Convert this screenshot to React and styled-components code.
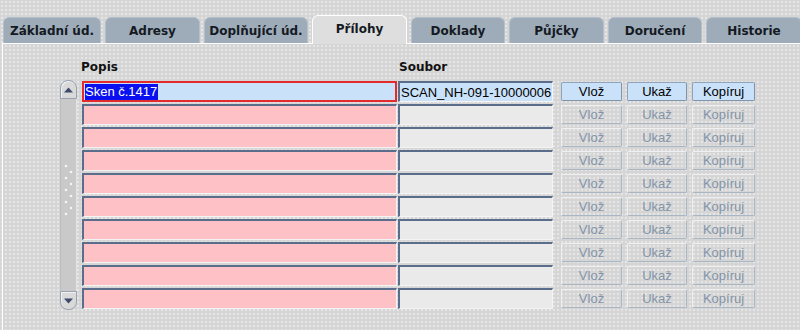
import styled, { createGlobalStyle } from "styled-components";

const GlobalStyle = createGlobalStyle`
  body {
    margin: 0;
    background: #d5d5d5;
    font-family: "Liberation Sans", Arial, sans-serif;
  }
`;

const Page = styled.div`
  width: 800px;
  height: 330px;
  overflow: hidden;
  background-color: #d5d5d5;
  background-image: radial-gradient(circle, #e6e6e6 0.7px, transparent 1px);
  background-size: 4px 4px;
`;

const TabBar = styled.div`
  display: flex;
  align-items: flex-end;
  gap: 4px;
  height: 44px;
  padding-left: 1px;
  margin-left: 2px;
  border-bottom: 1px solid #ffffff;
  box-sizing: border-box;
`;

const Tab = styled.div`
  flex: none;
  width: ${(p) => p.w}px;
  height: ${(p) => (p.active ? 29 : 26)}px;
  margin-bottom: ${(p) => (p.active ? -1 : 0)}px;
  box-sizing: border-box;
  display: flex;
  align-items: center;
  justify-content: center;
  padding-bottom: ${(p) => (p.active ? 2 : 0)}px;
  border-radius: 6px 6px 0 0;
  background: ${(p) => (p.active ? "#dedede" : "#9eabb9")};
  border: 1px solid ${(p) => (p.active ? "#ffffff" : "#b4bfcb")};
  border-bottom: none;
  font: bold 12px "DejaVu Sans", Verdana, sans-serif;
  color: #141a22;
  white-space: nowrap;
`;

const Panel = styled.div`
  margin-left: 2px;
  border-left: 1px solid #ffffff;
  height: 286px;
  padding-left: 57px;
  box-sizing: border-box;
`;

const HeaderRow = styled.div`
  display: flex;
  padding: 16px 0 0 21px;
  height: 36px;
  box-sizing: border-box;
  font: bold 12px "DejaVu Sans", Verdana, sans-serif;
  color: #111;
`;

const HeaderCell = styled.div`
  width: ${(p) => p.w}px;
`;

const Body = styled.div`
  display: flex;
  align-items: flex-start;
`;

const ScrollBar = styled.div`
  width: 17px;
  height: 230px;
  display: flex;
  flex-direction: column;
`;

const ScrollButton = styled.div`
  height: 19px;
  box-sizing: border-box;
  display: flex;
  align-items: center;
  justify-content: center;
  background: #d9d9d9;
  border: 1px solid #97a3b2;
  border-radius: ${(p) => (p.down ? "0 0 8px 8px" : "8px 8px 0 0")};
  box-shadow: inset 1px 1px 0 #f2f2f2;
`;

const Track = styled.div`
  flex: 1;
  background: #c9c9c9;
  border-left: 1px solid #bdbdbd;
  border-right: 1px solid #e4e4e4;
  display: flex;
  flex-direction: column;
  align-items: flex-start;
  padding: 65px 0 0 2px;
`;

const Rows = styled.div`
  display: flex;
  flex-direction: column;
  gap: 2px;
  padding-top: 1px;
  margin-left: 5px;
`;

const Row = styled.div`
  display: flex;
  height: 21px;
`;

const Field = styled.div`
  width: ${(p) => p.w}px;
  margin-right: ${(p) => p.mr}px;
  height: 21px;
  box-sizing: border-box;
  display: flex;
  align-items: center;
  padding-left: 1px;
  font-size: 13px;
  color: #000;
  white-space: nowrap;
  overflow: hidden;
  background: ${(p) => (p.active ? "#c9e2fa" : p.pink ? "#fec2c6" : "#ebeaea")};
  border-top: 2px solid #5a6e8c;
  border-left: 2px solid #5a6e8c;
  border-right: 1px solid #f4f4f4;
  border-bottom: 1px solid #f4f4f4;
  ${(p) =>
    p.focused &&
    `
    border: 2px solid #e42a2c;
  `}
`;

const Selected = styled.span`
  background: #0a10f0;
  color: #ffffff;
  line-height: 16px;
  padding-right: 1px;
`;

const Buttons = styled.div`
  display: flex;
  gap: 5px;
  align-items: center;
`;

const Button = styled.button`
  width: ${(p) => p.w}px;
  height: 19px;
  padding: 0;
  font: 13px "Liberation Sans", Arial, sans-serif;
  color: ${(p) => (p.enabled ? "#000" : "#8494a8")};
  background: ${(p) => (p.enabled ? "#c9e2fa" : "transparent")};
  border: 1px solid ${(p) => (p.enabled ? "#7f93ab" : "#a9b6c4")};
  border-top-color: ${(p) => (p.enabled ? "#8fa3bb" : "#f0f0f0")};
  border-left-color: ${(p) => (p.enabled ? "#8fa3bb" : "#f0f0f0")};
  border-radius: 2px;
`;

const tabs = [
  ["Základní úd.", 98],
  ["Adresy", 95],
  ["Doplňující úd.", 104],
  ["Přílohy", 95],
  ["Doklady", 94],
  ["Půjčky", 95],
  ["Doručení", 94],
  ["Historie", 96],
];

const Arrow = ({ down }) => (
  <svg width="9" height="6" viewBox="0 0 9 6">
    <path d={down ? "M0 0.5 H9 L4.5 5.5 Z" : "M0 5.5 H9 L4.5 0.5 Z"} fill="#3c4b6a" />
  </svg>
);

const Grip = () => {
  const dots = [];
  for (let i = 0; i < 9; i++) {
    dots.push(<circle key={"a" + i} cx={i % 2 ? 8 : 3} cy={2 + i * 6} r="1.3" fill="#f6f6f6" />);
  }
  return (
    <svg width="11" height="52" viewBox="0 0 11 52">
      {dots}
    </svg>
  );
};

export default function App() {
  const rows = Array.from({ length: 10 }, (_, i) => i);
  return (
    <Page>
      <GlobalStyle />
      <TabBar>
        {tabs.map(([label, w]) => (
          <Tab key={label} w={w} active={label === "Přílohy"}>
            {label}
          </Tab>
        ))}
      </TabBar>
      <Panel>
        <HeaderRow>
          <HeaderCell w={318}>Popis</HeaderCell>
          <HeaderCell w={155}>Soubor</HeaderCell>
        </HeaderRow>
        <Body>
          <ScrollBar>
            <ScrollButton>
              <Arrow />
            </ScrollButton>
            <Track>
              <Grip />
            </Track>
            <ScrollButton down>
              <Arrow down />
            </ScrollButton>
          </ScrollBar>
          <Rows>
            {rows.map((i) => (
              <Row key={i}>
                <Field w={315} mr={1} pink={i > 0} active={i === 0} focused={i === 0}>
                  {i === 0 && <Selected>Sken č.1417</Selected>}
                </Field>
                <Field w={155} mr={8} active={i === 0}>
                  {i === 0 && "SCAN_NH-091-10000006"}
                </Field>
                <Buttons>
                  <Button w={61} enabled={i === 0}>Vlož</Button>
                  <Button w={60} enabled={i === 0}>Ukaž</Button>
                  <Button w={63} enabled={i === 0}>Kopíruj</Button>
                </Buttons>
              </Row>
            ))}
          </Rows>
        </Body>
      </Panel>
    </Page>
  );
}
